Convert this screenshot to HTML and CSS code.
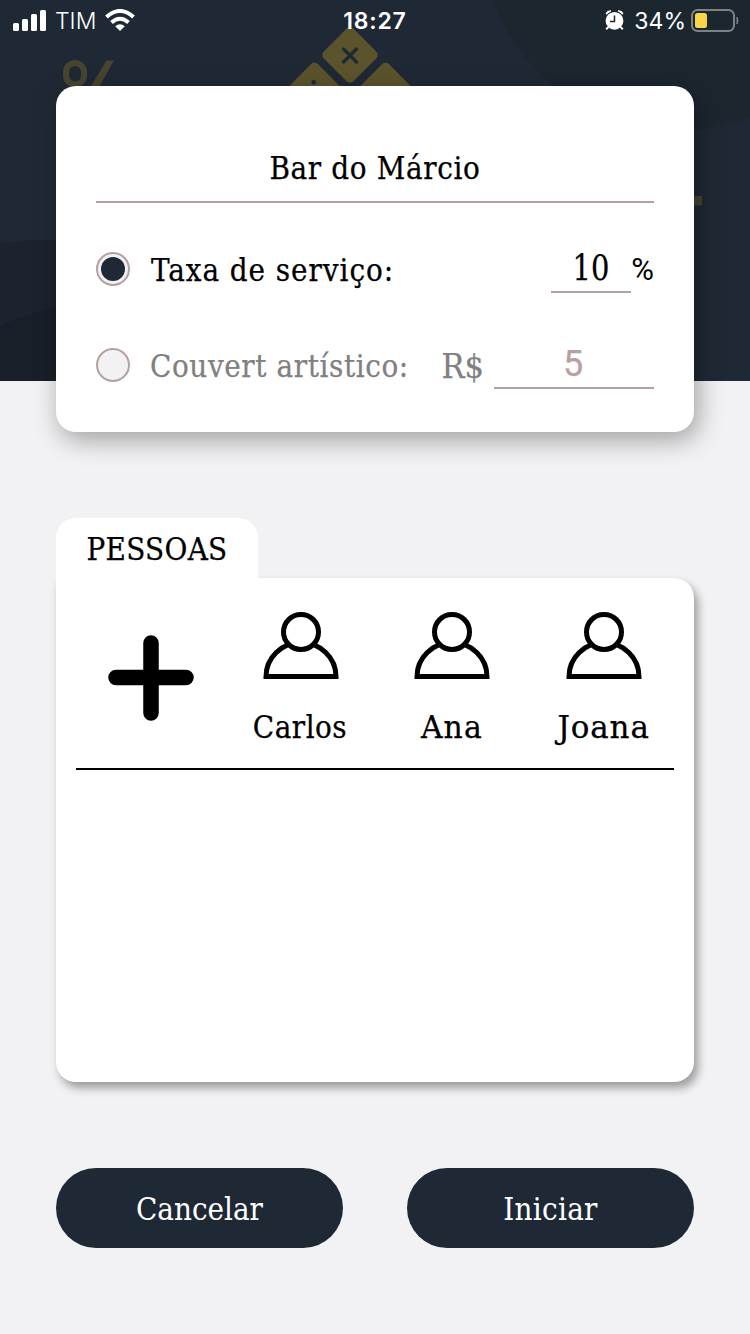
FILE: index.html
```html
<!DOCTYPE html>
<html lang="pt-BR">
<head>
<meta charset="utf-8">
<title>Bar do Márcio</title>
<link rel="stylesheet" href="styles.css">
</head>
<body>
<div class="screen">
  <svg class="hero" width="750" height="381" viewBox="0 0 750 381">
    <rect width="750" height="381" fill="#1f2935"/>
    <circle cx="680" cy="-70" r="200" fill="#1c262f"/>
    <circle cx="42" cy="460" r="220" fill="#1c222e"/>
    <circle cx="115" cy="560" r="260" fill="#181f28"/>
    <rect x="66" y="63" width="18" height="21.500" rx="9" fill="none" stroke="#47452f" stroke-width="6"/>
    <path d="M106.500 60.500h7.500L99 87h-8.500z" fill="#47452f"/>
    <rect x="680" y="196" width="22" height="9.500" fill="#47452f"/>
    <g fill="#5b532c">
      <rect x="329" y="34" width="42" height="42" rx="5" transform="rotate(45 350 55)"/>
      <rect x="293.500" y="69.500" width="42" height="42" rx="5" transform="rotate(45 314.500 90.500)"/>
      <rect x="364.500" y="69.500" width="42" height="42" rx="5" transform="rotate(45 385.500 90.500)"/>
    </g>
    <path d="M343.500 49l13 13M356.500 49l-13 13" stroke="#1f2935" stroke-width="3.400" stroke-linecap="round"/>
    <circle cx="313.700" cy="82.300" r="2.300" fill="#1f2935"/>
  </svg>

  <header class="status">
    <div class="status-side">
      <svg width="33" height="21" viewBox="0 0 33 21" fill="#fff"><rect x="0" y="13" width="6" height="8" rx="1.500"/><rect x="9" y="9" width="6" height="12" rx="1.500"/><rect x="18" y="4" width="6" height="17" rx="1.500"/><rect x="27" y="0" width="6" height="21" rx="1.500"/></svg>
      <span class="carrier">TIM</span>
      <svg width="30" height="22" viewBox="0 0 30 22" fill="none" stroke="#fff" stroke-width="4"><path d="M1.500 8Q15-4 28.500 8"/><path d="M6.500 13.500Q15 6 23.500 13.500"/><path d="M15 22l-4.800-4.800q4.800-4 9.600 0z" fill="#fff" stroke="none"/></svg>
    </div>
    <span class="time">18:27</span>
    <div class="status-side status-right">
      <svg width="20" height="20" viewBox="0 0 20 20"><circle cx="9.500" cy="10.800" r="8.900" fill="#fff"/><path d="M1 4Q1.500.5 6 .8L1.500 4zM18 4Q17.500.5 13 .8L17.500 4z" fill="#fff" stroke="#fff"/><path d="M3.500 17l-2.300 2.300M15.500 17l2.300 2.300" stroke="#fff" stroke-width="2"/><path d="M9.500 5.500v6H5" stroke="#1c262f" stroke-width="1.500" fill="none"/></svg>
      <span class="percent">34%</span>
      <svg width="48" height="23" viewBox="0 0 48 23"><rect x="1" y="1" width="42" height="21" rx="5.500" fill="none" stroke="#7c8286" stroke-width="2"/><rect x="4" y="4" width="12" height="15" rx="2.500" fill="#f9d649"/><path d="M46 8q2 3.500 0 7z" fill="#7c8286" stroke="#7c8286"/></svg>
    </div>
  </header>

  <main class="content">
    <section class="card bill">
      <div class="bill-name"><span class="t t-name">Bar do Márcio</span></div>
      <div class="row">
        <span class="radio radio-on"></span>
        <span class="t t-label">Taxa de serviço:</span>
        <span class="field field-tax"><span class="t t-ten">10</span></span>
        <span class="t t-pct">%</span>
      </div>
      <div class="row row-off">
        <span class="radio"></span>
        <span class="t t-cover">Couvert artístico:</span>
        <span class="t t-rs">R$</span>
        <span class="field field-cover"><span class="t t-five">5</span></span>
      </div>
    </section>

    <div class="tab"><span class="t t-tab">PESSOAS</span></div>
    <section class="card people">
      <div class="people-list">
        <div class="person">
          <svg class="plus" width="86" height="86" viewBox="0 0 86 86" stroke="#000" stroke-width="15.500" stroke-linecap="round"><path d="M8 42.500h70M43 8v70"/></svg>
        </div>
        <div class="person">
          <svg class="avatar" width="76" height="68" viewBox="0 0 76 68" fill="#fff" stroke="#000" stroke-width="5"><path d="M3 64.500A35 34 0 0 1 73 64.500z"/><circle cx="38" cy="20" r="17.500"/></svg>
          <span class="t t-p1">Carlos</span>
        </div>
        <div class="person">
          <svg class="avatar" width="76" height="68" viewBox="0 0 76 68" fill="#fff" stroke="#000" stroke-width="5"><path d="M3 64.500A35 34 0 0 1 73 64.500z"/><circle cx="38" cy="20" r="17.500"/></svg>
          <span class="t t-p2">Ana</span>
        </div>
        <div class="person">
          <svg class="avatar" width="76" height="68" viewBox="0 0 76 68" fill="#fff" stroke="#000" stroke-width="5"><path d="M3 64.500A35 34 0 0 1 73 64.500z"/><circle cx="38" cy="20" r="17.500"/></svg>
          <span class="t t-p3">Joana</span>
        </div>
      </div>
    </section>

    <div class="actions">
      <button class="btn"><span class="t t-cancel">Cancelar</span></button>
      <button class="btn"><span class="t t-start">Iniciar</span></button>
    </div>
  </main>
</div>
</body>
</html>
```
FILE: styles.css
```css
* { box-sizing: border-box; }
body { margin: 0; }
.screen {
  position: relative;
  width: 750px;
  height: 1334px;
  overflow: hidden;
  background: #f2f2f4;
  color: #000;
  font-family: "Roboto Slab", "DejaVu Serif Condensed", "DejaVu Serif", serif;
  font-size: 31px;
}
.hero { position: absolute; top: 0; left: 0; }
.status {
  position: relative;
  display: grid;
  grid-template-columns: 1fr auto 1fr;
  height: 40px;
  padding: 0 11px 0 13px;
  align-items: center;
  color: #fff;
  font-family: Inter, sans-serif;
  font-size: 23px;
}
.status-side { display: flex; align-items: center; }
.status-right { justify-content: flex-end; }
.carrier { margin: 2px 9px 0; font-weight: 300; }
.time { font-weight: 600; margin: 2px 2px 0 0; letter-spacing: .8px; }
.percent { margin: 2px 5px 0 9px; }
.content { position: relative; padding: 46px 56px 0; }
.card { background: #fff; border-radius: 20px; }
.bill {
  height: 346px;
  padding: 40px 40px 0;
  box-shadow: 4px 8px 26px rgba(0, 0, 0, .34);
}
.t { display: inline-block; white-space: nowrap; line-height: 40px; -webkit-text-stroke: .25px currentColor; }
.bill-name {
  height: 77px;
  padding-top: 22px;
  border-bottom: 2px solid #b7a0a0;
  text-align: center;
}
.t-name { letter-spacing: .65px; }
.row { display: flex; align-items: flex-start; height: 50px; margin-top: 40px; }
.row-off { margin-top: 46px; color: #808080; }
.radio {
  flex: none;
  width: 34px;
  height: 34px;
  margin: 9px 20px 0 0;
  padding: 3px;
  border: 2px solid #b7a0a0;
  border-radius: 50%;
  background: #f2f2f4;
}
.radio-on::before {
  content: "";
  display: block;
  width: 24px;
  height: 24px;
  border-radius: 50%;
  background: #1f2935;
}
.row .t { margin-top: 7px; }
.t-label { padding-left: 1px; letter-spacing: .95px; }
.t-cover { letter-spacing: .6px; }
.field {
  height: 50px;
  border-bottom: 2px solid #b7a0a0;
  text-align: center;
  font-size: 35px;
}
.row .field .t { margin-top: 5px; }
.field-tax { width: 80px; margin-left: auto; }
.t-ten { transform: scaleX(.92); }
.row .t-pct {
  width: 23px;
  font-family: Roboto, sans-serif;
  font-size: 31px;
  text-align: right;
  -webkit-text-stroke-width: 0;
}
.field-cover { width: 160px; color: #b7a0a0; }
.t-five { margin-left: -2px; font-family: Roboto, sans-serif; font-size: 36px; }
.t-rs { margin-left: auto; margin-right: 10px; font-size: 34px; }
.tab {
  position: relative;
  z-index: 1;
  width: 202px;
  height: 61px;
  margin-top: 86px;
  padding-top: 11px;
  border-radius: 20px 20px 0 0;
  background: #fff;
  text-align: center;
}
.t-tab { letter-spacing: .3px; }
.people {
  height: 504px;
  margin-top: -1px;
  padding: 0 20px;
  border-top-left-radius: 0;
  box-shadow: 4px 6px 10px rgba(0, 0, 0, .36);
}
.people-list {
  display: grid;
  grid-template-columns: 150px 150px 152px 151px;
  height: 192px;
  border-bottom: 2px solid #000;
}
.person { display: flex; flex-direction: column; align-items: center; padding-top: 34px; }
.plus { margin-top: 23px; }
.avatar { margin-bottom: 27px; }
.t-p1 { margin-left: -2px; letter-spacing: .5px; }
.t-p2 { margin-left: -1px; letter-spacing: 1px; transform: scaleX(1.07); }
.t-p3 { letter-spacing: .8px; transform: scaleX(1.11); }
.actions { display: flex; justify-content: space-between; margin-top: 86px; }
.btn {
  width: 287px;
  height: 80px;
  padding: 2px 0 0;
  border: 0;
  border-radius: 40px;
  background: #1f2935;
  color: #fff;
  font: inherit;
}
.t-start { letter-spacing: .3px; }
.btn .t { -webkit-text-stroke-width: 0; }
```
